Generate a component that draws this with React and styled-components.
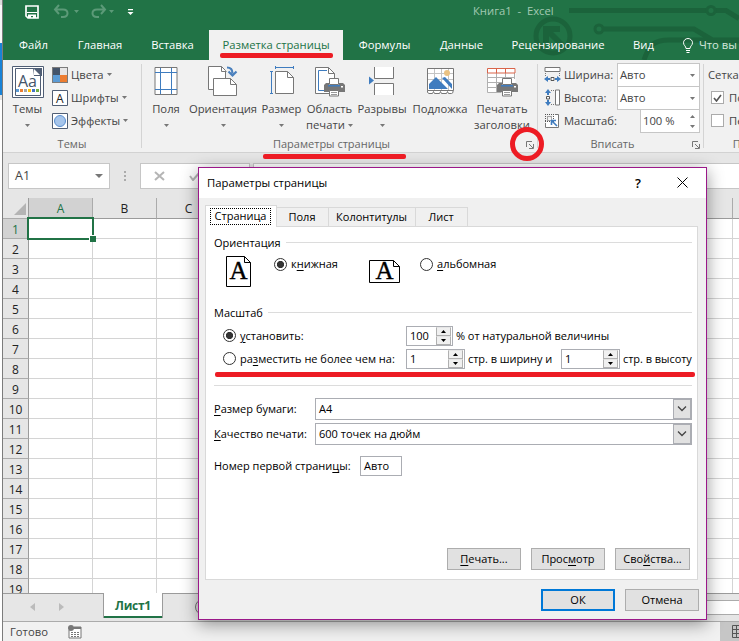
import styled, { createGlobalStyle, css } from 'styled-components';

const GlobalStyle = createGlobalStyle`
  * {
    box-sizing: border-box;
  }

  body {
    margin: 0;
    overflow: hidden;
    font-family: 'Open Sans', 'Noto Sans', sans-serif;
    font-size: 11.25px;
    line-height: 16px;
    color: #444;
  }

  svg {
    display: block;
    flex: none;
  }
`;

const Desktop = styled.div`
  position: relative;
  display: flex;
  width: 739px;
  height: 641px;
  overflow: hidden;
  white-space: nowrap;
`;

const BackWindow = styled.div`
  flex: none;
  width: 3px;
  border-right: 1px solid #7c7c7c;
  background: linear-gradient(#dcdcdc 5px, #f7f7f7 5px 43px, #1883d7 43px 95px, #e4e4e4 95px 100px, #fff 100px);
`;

const Window = styled.main`
  flex: 1;
  min-width: 0;
  display: flex;
  flex-direction: column;
  background: #e6e6e6;
`;

const Text = styled.span`
  u {
    text-underline-offset: 2px;
    text-decoration-thickness: 1px;
  }
`;

/* ---------- title bar and tabs ---------- */

const Top = styled.header`
  position: relative;
  flex: none;
  height: 60px;
  background: #217346;
  color: #fff;
`;

const Circuit = styled.svg`
  position: absolute;
  top: 0;
  right: 0;
`;

const TitleBar = styled.div`
  position: relative;
  display: flex;
  height: 30px;
  padding: 4px 0 0 22px;
`;

const DocTitle = styled.div`
  margin: -1px 0 0 336px;
  color: #a3c9b2;
  white-space: pre;
`;

const Tabs = styled.nav`
  position: relative;
  display: flex;
  height: 30px;
`;

const Tab = styled.div`
  flex: none;
  display: flex;
  align-items: center;
  justify-content: center;
  width: ${({ $w }) => $w}px;
  height: 30px;
  ${({ $active }) => $active && css`
    background: #f1f1f1;
    color: #217346;
  `}
`;

const TellMe = styled.div`
  display: flex;
  align-items: center;
  gap: 6px;
  padding-left: 15px;
  color: #d5e6dc;
`;

/* ---------- ribbon ---------- */

const Ribbon = styled.section`
  flex: none;
  display: flex;
  height: 93px;
  background: #f1f1f1;
  border-bottom: 1px solid #d2d2d2;
`;

const Group = styled.div`
  flex: none;
  display: flex;
  flex-direction: column;
  width: ${({ $w }) => $w}px;
  height: 84px;
  margin-top: 4px;
  border-right: 1px solid #d4d4d4;
`;

const GroupBody = styled.div`
  flex: none;
  display: flex;
  height: 72px;
  margin-top: -1px;
  padding-left: ${({ $pl }) => $pl || 0}px;
`;

const GroupFooter = styled.div`
  position: relative;
  flex: none;
  display: flex;
  align-items: center;
  justify-content: center;
  height: 16px;
  margin-top: 1px;
  padding-right: ${({ $pr }) => $pr || 0}px;
  color: #666;
  font-size: 11px;
`;

const Launcher = styled.span`
  position: absolute;
  right: 3px;
  top: 5px;
`;

const BigButton = styled.div`
  flex: none;
  display: flex;
  flex-direction: column;
  align-items: center;
  width: ${({ $w }) => $w}px;
`;

const BigIcon = styled.div`
  height: 38px;
  padding-top: 3px;
`;

const BigLine = styled.div`
  display: flex;
  align-items: center;
  gap: 3px;
  height: 16px;
`;

const Stack = styled.div`
  display: flex;
  flex-direction: column;
  margin-left: ${({ $ml }) => $ml || 0}px;
`;

const SmallRow = styled.div`
  display: flex;
  align-items: center;
  gap: 3px;
  height: 23px;
`;

const SmallLabel = styled.div`
  width: ${({ $w }) => ($w ? `${$w}px` : 'auto')};
`;

const RibbonField = styled.div`
  display: flex;
  align-items: center;
  justify-content: space-between;
  width: ${({ $w }) => $w}px;
  height: 24px;
  margin: 0 0 -1px -5px;
  padding: 0 4px 0 2px;
  border: 1px solid #c6c6c6;
  background: #fff;
`;

const Check = styled.span`
  display: flex;
  align-items: center;
  justify-content: center;
  width: 13px;
  height: 13px;
  margin: 0 2px 0 3px;
  border: 1px solid #ababab;
  background: #fff;
`;

/* ---------- formula bar ---------- */

const FormulaBar = styled.div`
  flex: none;
  display: flex;
  height: 45px;
  padding: 10px 0 0 5px;
`;

const NameBox = styled.div`
  flex: none;
  display: flex;
  align-items: center;
  justify-content: space-between;
  width: 102px;
  height: 26px;
  padding: 0 6px;
  border: 1px solid #c6c6c6;
  background: #fff;
  font-size: 12.5px;
`;

const Dots = styled.div`
  flex: none;
  display: flex;
  flex-direction: column;
  justify-content: center;
  gap: 2px;
  width: 30px;
  height: 26px;
  padding-left: 14px;
  i {
    width: 2px;
    height: 2px;
    background: #ababab;
  }
`;

const FormulaBox = styled.div`
  flex: none;
  display: flex;
  align-items: center;
  gap: 24px;
  width: ${({ $w }) => $w}px;
  height: 26px;
  margin-right: 3px;
  padding-left: 13px;
  border: 1px solid #c6c6c6;
  background: #fff;
`;

/* ---------- sheet ---------- */

const Sheet = styled.section`
  flex: none;
  display: grid;
  grid-template-columns: 26px repeat(12, 64px);
  grid-template-rows: 21px;
  grid-auto-rows: 20px;
  height: 396px;
  overflow: hidden;
  border-bottom: 1px solid #9b9b9b;
`;

const Corner = styled.div`
  display: flex;
  align-items: flex-end;
  justify-content: flex-end;
  padding: 0 2px 3px 0;
  border-right: 1px solid #9b9b9b;
  border-bottom: 1px solid #ababab;
`;

const Heading = styled.div`
  display: flex;
  align-items: center;
  justify-content: center;
  font: 12px 'Open Sans', sans-serif;
  color: #222;
  border-right: 1px solid #ababab;
  border-bottom: 1px solid #9b9b9b;
  ${({ $row }) => $row && css`
    border-right-color: #9b9b9b;
    border-bottom-color: #ababab;
    padding-top: 2px;
  `}
  ${({ $on }) => $on && css`
    background: #d2d2d2;
    color: #217346;
  `}
`;

const Cell = styled.div`
  position: relative;
  background: #fff;
  border-right: 1px solid #d4d4d4;
  border-bottom: 1px solid #d4d4d4;
`;

const Selection = styled.div`
  position: absolute;
  z-index: 1;
  left: -2px;
  top: -2px;
  width: 67px;
  height: 23px;
  border: 2px solid #217346;
  &::after {
    content: '';
    position: absolute;
    right: -4px;
    bottom: -4px;
    width: 6px;
    height: 6px;
    border: solid #fff;
    border-width: 1px 0 0 1px;
    background: #217346;
  }
`;

const SheetBar = styled.div`
  flex: none;
  display: flex;
  justify-content: space-between;
  height: 28px;
  border-bottom: 1px solid #ababab;
`;

const SheetTabs = styled.div`
  display: flex;
  align-items: flex-start;
`;

const NavArrows = styled.div`
  display: flex;
  gap: 24px;
  width: 100px;
  padding: 9px 0 0 27px;
`;

const SheetTab = styled.div`
  position: relative;
  width: 60px;
  height: 25px;
  margin-top: -1px;
  padding-top: 5px;
  border: solid #9b9b9b;
  border-width: 0 1px;
  box-shadow: inset 0 -2px #217346;
  background: #fff;
  color: #217346;
  font-size: 12px;
  font-weight: 700;
  letter-spacing: -0.3px;
  text-align: center;
`;

const AddSheet = styled.div`
  width: 16px;
  height: 16px;
  margin: 5px 0 0 32px;
  border: 1px solid #777;
  border-radius: 50%;
`;

const ScrollTrack = styled.div`
  width: 139px;
  height: 15px;
  margin-top: 6px;
  border: solid #ababab;
  border-width: 1px 0;
  background: #fff;
`;

const StatusBar = styled.footer`
  flex: none;
  display: flex;
  align-items: center;
  gap: 20px;
  height: 19px;
  padding-left: 7px;
  background: #f1f1f1;
`;

const ViewButton = styled.div`
  display: flex;
  align-items: center;
  width: 19px;
  height: 19px;
  margin-left: auto;
  padding-left: 12px;
  background: #c6c6c6;
`;

/* ---------- dialog ---------- */

const Dialog = styled.section`
  position: absolute;
  left: 198px;
  top: 167px;
  width: 509px;
  height: 453px;
  border: 1px solid #9b1889;
  background: #f0f0f0;
  color: #000;
  font-size: 11px;
  box-shadow: 0 4px 16px rgba(0, 0, 0, 0.42);
`;

const DialogTitle = styled.div`
  display: flex;
  align-items: center;
  height: 30px;
  padding: 0 18px 1px 8px;
  background: #fff;
  font-size: 11.3px;
`;

const Help = styled.span`
  margin-left: auto;
  margin-right: 36px;
  font-size: 13px;
  font-weight: 600;
`;

const DialogTabs = styled.div`
  position: relative;
  display: flex;
  align-items: flex-end;
  height: 28px;
  margin-left: 6px;
`;

const DialogTab = styled.div`
  display: flex;
  align-items: center;
  justify-content: center;
  width: ${({ $w }) => $w}px;
  height: 19px;
  padding-right: 1px;
  border: 1px solid #d9d9d9;
  border-width: 1px 1px 0 0;
  ${({ $active }) => $active && css`
    height: 22px;
    margin-bottom: -1px;
    padding-bottom: 1px;
    border-left-width: 1px;
    background: #fff;
    z-index: 1;
  `}
`;

const Focus = styled.span`
  height: 17px;
  padding: 0 4px;
  border: 1px dotted #000;
  line-height: 14px;
`;

const Panel = styled.div`
  width: 493px;
  height: 354px;
  margin-left: 6px;
  padding: 7px 5px 0 8px;
  border: 1px solid #d9d9d9;
  background: #fff;
`;

const Legend = styled.div`
  display: flex;
  align-items: center;
  gap: 5px;
  height: 18px;
  margin-top: ${({ $mt }) => $mt || 0}px;
  &::after {
    content: '';
    flex: 1;
    height: 1px;
    margin-top: -2px;
    background: #dcdcdc;
  }
`;

const Rule = styled.div`
  height: 1px;
  margin-top: 16px;
  background: #dcdcdc;
`;

const Row = styled.div`
  display: flex;
  align-items: ${({ $top }) => ($top ? 'flex-start' : 'center')};
  height: ${({ $h }) => $h}px;
  margin-top: ${({ $mt }) => $mt || 0}px;
  padding-left: ${({ $pl }) => $pl || 0}px;
`;

const Option = styled.div`
  flex: none;
  display: flex;
  align-items: center;
  gap: 4px;
  width: ${({ $w }) => ($w ? `${$w}px` : 'auto')};
  height: 20px;
`;

const Radio = styled.span`
  flex: none;
  width: 13px;
  height: 13px;
  border: 1px solid #333;
  border-radius: 50%;
  background: ${({ $on }) => ($on ? 'radial-gradient(circle, #333 3.2px, #fff 4px)' : '#fff')};
`;

const PageIcon = styled.div`
  flex: none;
  width: ${({ $w }) => $w}px;
  margin-top: ${({ $mt }) => $mt}px;
`;

const FieldLabel = styled.div`
  flex: none;
  width: ${({ $w }) => $w}px;
`;

const Field = styled.div`
  flex: none;
  display: flex;
  align-items: center;
  justify-content: space-between;
  width: ${({ $w }) => $w}px;
  height: ${({ $h }) => $h || 20}px;
  padding-left: 3px;
  border: 1px solid #abadb3;
  background: #fff;
`;

const Spin = styled.div`
  display: flex;
  flex-direction: column;
  padding-right: 1px;
  span {
    display: flex;
    align-items: center;
    justify-content: center;
    width: 15px;
    height: 9px;
    border: 1px solid #b0b0b0;
    border-top-color: #e6e6e6;
    background: #f0f0f0;
  }
`;

const DropButton = styled.div`
  display: flex;
  align-items: center;
  justify-content: center;
  width: 18px;
  height: 20px;
  border: 1px solid #abadb3;
  background: #e1e1e1;
`;

const Note = styled.span`
  padding-left: 3px;
  letter-spacing: -0.05px;
`;

const Buttons = styled.div`
  display: flex;
  justify-content: flex-end;
  gap: 10px;
  margin-top: ${({ $mt }) => $mt}px;
  padding-right: ${({ $pr }) => $pr}px;
`;

const Button = styled.button`
  width: ${({ $w }) => $w || 74}px;
  height: 22px;
  padding: 0;
  border: ${({ $primary }) => ($primary ? '2px solid #0078d7' : '1px solid #adadad')};
  background: #e1e1e1;
  color: #000;
  font: inherit;
  line-height: 18px;
`;

/* ---------- red marks ---------- */

const Mark = styled.div`
  position: absolute;
  left: ${({ $x }) => $x}px;
  top: ${({ $y }) => $y}px;
  width: ${({ $w }) => $w}px;
  height: 5px;
  border-radius: 2px;
  background: #ed1c24;
`;

const Ring = styled.div`
  position: absolute;
  left: 510px;
  top: 127px;
  width: 34px;
  height: 34px;
  border: 5px solid #ed1c24;
  border-radius: 50%;
`;

/* ---------- icons ---------- */

const Arrow = ({ up, w = 5, h = 3, color = '#777' }) => (
  <svg width={w} height={h} viewBox="0 0 10 6" preserveAspectRatio="none">
    <path d={up ? 'M0 6h10L5 0z' : 'M0 0h10L5 6z'} fill={color} />
  </svg>
);

const LauncherIcon = () => (
  <Launcher>
    <svg width="8" height="8" fill="none" stroke="#777">
      <path d="M.5 6V.5H6M3 3l4 4M7.500 3v4.500H3" />
    </svg>
  </Launcher>
);

const QuickIcons = () => (
  <svg width="112" height="18" viewBox="0 0 112 18" fill="none">
    <path d="M1 2h12v12H3l-2-2z" stroke="#fff" strokeWidth="1.700" />
    <path d="M2 8.500h10" stroke="#fff" />
    <path d="M3 10.500h8V14H8v-2H6v2H3z" fill="#fff" />
    <g stroke="#5c9a78" strokeWidth="2">
      <path d="M34 1l-4 4.500 4 4.500M31 5.500h7c6 0 6 7.500 0 7.500h-2" />
      <path d="M76 1l4 4.500-4 4.500M79 5.500h-7c-6 0-6 7.500 0 7.500h2" />
    </g>
    <path d="M49 6h5l-2.500 3zM84 6h5l-2.500 3z" fill="#5c9a78" />
    <path d="M103 5h5v1.200h-5zM102.500 8h6l-3 3z" fill="#fff" />
  </svg>
);

const ThemeIcon = () => (
  <svg width="32" height="32" fill="none">
    <path d="M.5.5h31v31H.5z" fill="#fff" stroke="#505e75" />
    <path d="M3.500 2.500h18l7 7v20h-25z" stroke="#505e75" strokeWidth="1" />
    <path d="M21 2h9v8h-8z" fill="#505e75" />
    <path d="M22 3v6h6z" fill="#fff" />
    <text x="6" y="21" fontSize="17" fill="#44546a" textLength="19" lengthAdjust="spacingAndGlyphs">Aa</text>
    {['#5b9bd5', '#ed7d31', '#a5a5a5', '#ffc000', '#4472c4', '#70ad47'].map((c, i) => (
      <rect key={c} x={4 + i * 4} y="23" width="3" height="3" fill={c} />
    ))}
  </svg>
);

const ColorsIcon = () => (
  <svg width="16" height="16">
    <path d="M0 0h16v16H0z" fill="#7b7b7b" />
    <path d="M1 1h7v7H1z" fill="#44546a" />
    <path d="M8 1h7v7H8z" fill="#e7e6e6" />
    <path d="M1 8h7v7H1z" fill="#5b9bd5" />
    <path d="M8 8h7v7H8z" fill="#ed7d31" />
  </svg>
);

const FontsIcon = () => (
  <svg width="16" height="16">
    <path d="M.5.5h15v15H.5z" fill="#fff" stroke="#505e75" />
    <text x="4" y="12.500" fontSize="12" fill="#222">A</text>
  </svg>
);

const EffectsIcon = () => (
  <svg width="16" height="16">
    <path d="M.5.5h15v15H.5z" fill="#fff" stroke="#505e75" />
    <circle cx="8" cy="8" r="5.500" fill="#a6c5eb" stroke="#5b8fd0" />
  </svg>
);

const MarginsIcon = () => (
  <svg width="24" height="29" fill="none">
    <path d="M1 1.500h22v27H1z" fill="#fff" stroke="#777" />
    <path d="M6.500 2v26M17.500 2v26M1 6.500h22M1 23.500h22" stroke="#3f7cbf" />
  </svg>
);

const OrientationIcon = () => (
  <svg width="30" height="31" fill="none">
    <path d="M.5.500h13l4 4v19H.5z" fill="#fff" stroke="#777" />
    <path d="M13.500.500v5h5" stroke="#777" />
    <path d="M5.500 12.500h17l6 6v11h-23z" fill="#fff" stroke="#777" />
    <path d="M22.500 12.500v6h6" stroke="#777" />
    <path d="M19 1.500c4 0 5.500 2 5.500 6M20.500 5.500l4 4 4-4" stroke="#4a80bd" strokeWidth="2.200" />
  </svg>
);

const SizeIcon = () => (
  <svg width="24" height="29" fill="none">
    <path d="M5.500 5.500h12l6 6v16h-18z" fill="#fff" stroke="#777" />
    <path d="M17.500 5.500v6h6" stroke="#777" />
    <path d="M5 1.500h19M5.500 0v3M23.500 0v3M1.500 5v23M0 5.500h3M0 27.500h3" stroke="#3f7cbf" />
  </svg>
);

const Printer = ({ x, y }) => (
  <g transform={`translate(${x} ${y})`}>
    <path d="M5.500.500h9v6h-9z" fill="#fff" stroke="#777" />
    <path d="M2 5h3v3h10V5h4l2 2v7H0V7z" fill="#777" />
    <path d="M4 7h12v1.500H4z" fill="#3f7cbf" />
    <path d="M17 8h2v1.500h-2z" fill="#fff" />
    <path d="M5.500 12.500h9v5.500h-9z" fill="#fff" stroke="#777" />
    <path d="M7 14.500h6M7 16.500h6" stroke="#999" />
  </g>
);

const PrintAreaIcon = () => (
  <svg width="30" height="31" fill="none">
    <path d="M.5 1.500h13l6 6v20H.5z" fill="#fff" stroke="#777" />
    <path d="M13.500 1.500v6h6" stroke="#777" />
    <path d="M12 4.500H3.500v20H10" stroke="#3f7cbf" />
    <Printer x={9} y={12} />
  </svg>
);

const BreaksIcon = () => (
  <svg width="26" height="29" fill="none">
    <path d="M5.500 1v11.500h19V1M5.500 29V17.500h19V29" fill="#fff" stroke="#777" />
    <path d="M0 10.500l5 4-5 4z" fill="#3f7cbf" />
  </svg>
);

const BackgroundIcon = () => (
  <svg width="27" height="28" fill="none">
    <path d="M.5 2.500h26v22H.5z" fill="#fff" stroke="#777" />
    <path d="M1 7.500h25M1 13.500h25M7.500 3v21M14.500 3v21M21.500 3v21" stroke="#c4c4c4" />
    <circle cx="20" cy="7" r="3" fill="#eac282" />
    <path d="M2 23v-5l7-7 12 12zM15 12l3-1 7 7v5z" fill="#3f7cbf" />
    <path d="M.5 24.500v2l1.500 1h3.500l1-2 1 2h5l1-2 1 2h5l1-2 1 2h3l1.500-1v-2z" fill="#fff" stroke="#777" />
  </svg>
);

const PrintTitlesIcon = () => (
  <svg width="31" height="31" fill="none">
    <path d="M.5 2.500h28v24H.5z" fill="#fff" />
    <path d="M.5 7v19.500h14M0 11.500h28M0 16.500h16M0 21.500h14M9.500 7v19M18.500 7v6M27.500 7v6" stroke="#b0b0b0" />
    <path d="M.5 2.500h27.500v4.500H.5zM9.500 2v5M18.500 2v5" stroke="#d9644a" />
    <Printer x={10} y={12} />
  </svg>
);

const WidthIcon = () => (
  <svg width="17" height="17" fill="none">
    <path d="M1 1.500h15v4H1z" fill="#fff" stroke="#777" />
    <path d="M1.500 7v3M15.500 7v3" stroke="#777" strokeDasharray="1 1" />
    <path d="M0 13l4-3v2h2v2H4v2zM17 13l-4-3v2h-2v2h2v2z" fill="#3f7cbf" />
    <path d="M7 11.500h3v3H7z" fill="#fff" stroke="#555" />
  </svg>
);

const HeightIcon = () => (
  <svg width="17" height="17" fill="none">
    <path d="M11.500 1h4v15h-4z" fill="#fff" stroke="#777" />
    <path d="M7 1.500h3M7 15.500h3" stroke="#777" strokeDasharray="1 1" />
    <path d="M4 0l3 4H5v2H3V4H1zM4 17l3-4H5v-2H3v2H1z" fill="#3f7cbf" />
    <path d="M2.500 7.500h3v2.500h-3z" fill="#fff" stroke="#555" />
  </svg>
);

const ScaleIcon = () => (
  <svg width="17" height="16" fill="none">
    <path d="M11 1.500h3.500v13h-13V10" fill="#fff" stroke="#777" />
    <path d="M1 1.500h9M1 8.500h9M1.500 1v8M9.500 1v8M3.500 3.500h4v4h-4z" stroke="#555" strokeDasharray="1 1" />
    <path d="M7.500 12V7.500H12M8 8l5 5" stroke="#3f7cbf" strokeWidth="1.600" />
  </svg>
);

const PageA = ({ w, h }) => (
  <svg width={w} height={h} fill="none" stroke="#000">
    <path d={`M.5.500H${w - 6.5}l6 6V${h - 0.5}H.5z`} fill="#fff" />
    <path d={`M${w - 6.5}.500v6h6`} />
    <text
      x={w / 2} y={h / 2 + 7.5} textAnchor="middle" fill="#000" strokeWidth="0.4"
      fontFamily="'Liberation Serif', serif" fontSize="25"
    >
      A
    </text>
  </svg>
);

/* ---------- parts ---------- */

const Spinner = ({ value, width }) => (
  <Field $w={width}>
    {value}
    <Spin>
      <span><Arrow up color="#000" /></span>
      <span><Arrow color="#000" /></span>
    </Spin>
  </Field>
);

const Combo = ({ children }) => (
  <Field $w={377} $h={22}>
    {children}
    <DropButton>
      <svg width="10" height="6" fill="none" stroke="#444" strokeWidth="1.300">
        <path d="M1 .500l4 4 4-4" />
      </svg>
    </DropButton>
  </Field>
);

const tabs = [
  { name: 'Файл', w: 61 },
  { name: 'Главная', w: 72 },
  { name: 'Вставка', w: 73 },
  { name: 'Разметка страницы', w: 134, active: true },
  { name: 'Формулы', w: 83 },
  { name: 'Данные', w: 71 },
  { name: 'Рецензирование', w: 122 },
  { name: 'Вид', w: 49 },
];

const pageButtons = [
  { lines: ['Поля'], w: 42, icon: <MarginsIcon /> },
  { lines: ['Ориентация'], w: 72, icon: <OrientationIcon /> },
  { lines: ['Размер'], w: 45, icon: <SizeIcon /> },
  { lines: ['Область', 'печати'], w: 51, icon: <PrintAreaIcon /> },
  { lines: ['Разрывы'], w: 54, icon: <BreaksIcon /> },
  { lines: ['Подложка'], w: 62, icon: <BackgroundIcon />, plain: true },
  { lines: ['Печатать', 'заголовки'], w: 62, icon: <PrintTitlesIcon />, plain: true },
];

const themeRows = [
  { name: 'Цвета', icon: <ColorsIcon /> },
  { name: 'Шрифты', icon: <FontsIcon /> },
  { name: 'Эффекты', icon: <EffectsIcon /> },
];

const columns = ['A', 'B', 'C', 'D', 'E', 'F', 'G', 'H', 'I', 'J', 'K', 'L'];
const rows = Array.from({ length: 19 }, (_, i) => i + 1);

function BigItem({ lines, w, icon, plain }) {
  return (
    <BigButton $w={w}>
      <BigIcon>{icon}</BigIcon>
      <BigLine>{lines[0]}</BigLine>
      <BigLine>
        {lines[1]}
        {!plain && <Arrow />}
      </BigLine>
    </BigButton>
  );
}

function PageSetup() {
  return (
    <Dialog>
      <DialogTitle>
        <Text>Параметры страницы</Text>
        <Help>?</Help>
        <svg width="11" height="11" stroke="#000">
          <path d="M.5.500l10 10M10.500.500l-10 10" />
        </svg>
      </DialogTitle>
      <DialogTabs>
        <DialogTab $w={72} $active><Focus>Страница</Focus></DialogTab>
        <DialogTab $w={52}>Поля</DialogTab>
        <DialogTab $w={87}>Колонтитулы</DialogTab>
        <DialogTab $w={52}>Лист</DialogTab>
      </DialogTabs>
      <Panel>
        <Legend>Ориентация</Legend>
        <Row $h={36} $mt={2} $pl={12} $top>
          <PageIcon $w={48} $mt={2}><PageA w={25} h={31} /></PageIcon>
          <Option $w={95}><Radio $on /><Text>к<u>н</u>ижная</Text></Option>
          <PageIcon $w={51} $mt={6}><PageA w={31} h={23} /></PageIcon>
          <Option><Radio /><Text><u>а</u>льбомная</Text></Option>
        </Row>
        <Legend $mt={14}>Масштаб</Legend>
        <Row $h={21} $mt={3} $pl={9}>
          <Option $w={183}><Radio $on /><Text><u>у</u>становить:</Text></Option>
          <Spinner value="100" width={47} />
          <Note>% от натуральной величины</Note>
        </Row>
        <Row $h={21} $mt={2} $pl={9}>
          <Option $w={183}><Radio /><Text>ра<u>з</u>местить не более чем на:</Text></Option>
          <Spinner value="1" width={59} />
          <FieldLabel $w={96}><Note>стр. в ширину и</Note></FieldLabel>
          <Spinner value="1" width={59} />
          <Note>стр. в высоту</Note>
        </Row>
        <Rule />
        <Row $h={22} $mt={12}>
          <FieldLabel $w={101}><Text><u>Р</u>азмер бумаги:</Text></FieldLabel>
          <Combo>A4</Combo>
        </Row>
        <Row $h={22} $mt={3}>
          <FieldLabel $w={101}><Text><u>К</u>ачество печати:</Text></FieldLabel>
          <Combo>600 точек на дюйм</Combo>
        </Row>
        <Row $h={20} $mt={11}>
          <FieldLabel $w={146}><Text>Номер первой страни<u>ц</u>ы:</Text></FieldLabel>
          <Field $w={42}>Авто</Field>
        </Row>
        <Buttons $mt={72} $pr={2}>
          <Button><Text><u>П</u>ечать...</Text></Button>
          <Button><Text>Прос<u>м</u>отр</Text></Button>
          <Button $w={75}><Text>Сво<u>й</u>ства...</Text></Button>
        </Buttons>
      </Panel>
      <Buttons $mt={9} $pr={7}>
        <Button $primary>ОК</Button>
        <Button>Отмена</Button>
      </Buttons>
    </Dialog>
  );
}

export default function App() {
  return (
    <Desktop>
      <GlobalStyle />
      <BackWindow />
      <Window>
        <Top>
          <Circuit width="250" height="60" fill="none" stroke="#1b633b" strokeWidth="5">
            <circle cx="64" cy="36" r="17" />
            <path d="M57 29l16 16M57 43V29h14" strokeWidth="6" />
            <path d="M80 10.500h138M227 10.500h10l13 8" />
            <circle cx="222" cy="10.500" r="4" strokeWidth="3" />
            <circle cx="110" cy="29" r="4" strokeWidth="3" />
            <path d="M115 29h90l20 12h25M155 60c5-15 10-20 25-20h70" />
          </Circuit>
          <TitleBar>
            <QuickIcons />
            <DocTitle>Книга1  -  Excel</DocTitle>
          </TitleBar>
          <Tabs>
            {tabs.map(({ name, w, active }) => (
              <Tab key={name} $w={w} $active={active}>{name}</Tab>
            ))}
            <TellMe>
              <svg width="10" height="15" fill="none" stroke="#fff">
                <path d="M3 10.500C3 8 .5 7.500.500 4.800a4.500 4.300 0 0 1 9 0C9.500 7.500 7 8 7 10.500zM3 12.500h4M3.500 14.500h3" />
              </svg>
              Что вы хотите
            </TellMe>
          </Tabs>
        </Top>

        <Ribbon>
          <Group $w={139}>
            <GroupBody $pl={4}>
              <BigItem lines={['Темы']} w={41} icon={<ThemeIcon />} />
              <Stack $ml={4}>
                {themeRows.map(({ name, icon }) => (
                  <SmallRow key={name}>{icon}{name}<Arrow /></SmallRow>
                ))}
              </Stack>
            </GroupBody>
            <GroupFooter>Темы</GroupFooter>
          </Group>
          <Group $w={396}>
            <GroupBody $pl={3}>
              {pageButtons.map((item) => <BigItem key={item.lines[0]} {...item} />)}
            </GroupBody>
            <GroupFooter $pr={16}>Параметры страницы<LauncherIcon /></GroupFooter>
          </Group>
          <Group $w={166}>
            <GroupBody $pl={6}>
              <Stack>
                <SmallRow>
                  <WidthIcon /><SmallLabel $w={55}>Ширина:</SmallLabel>
                  <RibbonField $w={83}>Авто<Arrow /></RibbonField>
                </SmallRow>
                <SmallRow>
                  <HeightIcon /><SmallLabel $w={55}>Высота:</SmallLabel>
                  <RibbonField $w={83}>Авто<Arrow /></RibbonField>
                </SmallRow>
                <SmallRow>
                  <ScaleIcon /><SmallLabel $w={78}>Масштаб:</SmallLabel>
                  <RibbonField $w={60}>
                    100 %
                    <svg width="5" height="13" fill="#777"><path d="M0 3h5L2.500 0zM0 10h5l-2.500 3z" /></svg>
                  </RibbonField>
                </SmallRow>
              </Stack>
            </GroupBody>
            <GroupFooter $pr={16}>Вписать<LauncherIcon /></GroupFooter>
          </Group>
          <Group $w={120}>
            <GroupBody $pl={4}>
              <Stack>
                <SmallRow>Сетка</SmallRow>
                <SmallRow>
                  <Check>
                    <svg width="9" height="8" fill="none" stroke="#555" strokeWidth="1.600"><path d="M1 4l2.500 3L8 1" /></svg>
                  </Check>
                  Показать
                </SmallRow>
                <SmallRow><Check />Печать</SmallRow>
              </Stack>
            </GroupBody>
            <GroupFooter>Параметры</GroupFooter>
          </Group>
        </Ribbon>

        <FormulaBar>
          <NameBox>A1<Arrow w={8} h={4} /></NameBox>
          <Dots><i /><i /><i /></Dots>
          <FormulaBox $w={110}>
            <svg width="11" height="10" stroke="#b5b5b5" strokeWidth="2"><path d="M1 1l9 8M10 1L1 9" /></svg>
            <svg width="12" height="10" fill="none" stroke="#b5b5b5" strokeWidth="2"><path d="M1 5l3 4 7-8" /></svg>
          </FormulaBox>
          <FormulaBox $w={520} />
        </FormulaBar>

        <Sheet>
          <Corner>
            <svg width="12" height="12"><path d="M12 0v12H0z" fill="#b4b4b4" /></svg>
          </Corner>
          {columns.map((name) => <Heading key={name} $on={name === 'A'}>{name}</Heading>)}
          {rows.map((n) => [
            <Heading key={n} $row $on={n === 1}>{n}</Heading>,
            ...columns.map((name) => (
              <Cell key={name + n}>{n === 1 && name === 'A' && <Selection />}</Cell>
            )),
          ])}
        </Sheet>

        <SheetBar>
          <SheetTabs>
            <NavArrows>
              <svg width="5" height="8"><path d="M5 0v8L0 4z" fill="#bbb" /></svg>
              <svg width="5" height="8"><path d="M0 0v8l5-4z" fill="#bbb" /></svg>
            </NavArrows>
            <SheetTab>Лист1</SheetTab>
            <AddSheet />
          </SheetTabs>
          <ScrollTrack />
        </SheetBar>

        <StatusBar>
          Готово
          <svg width="14" height="14" fill="none">
            <path d="M1 5v8h12V2H6" fill="#fff" stroke="#777" />
            <path d="M5 2h8v2H5z" fill="#777" />
            <path d="M3 7.500h9M3 9.500h9M3 11.500h9" stroke="#777" strokeDasharray="2 1" />
            <circle cx="3" cy="3" r="3" fill="#777" />
          </svg>
          <ViewButton>
            <svg width="13" height="13" fill="none" stroke="#555"><path d="M.5.500h12v12H.5zM4.500 0v13M8.500 0v13M0 4.500h13M0 8.500h13" /></svg>
          </ViewButton>
        </StatusBar>
      </Window>

      <PageSetup />

      <Mark $x={220} $y={53} $w={113} />
      <Mark $x={263} $y={154} $w={143} />
      <Mark $x={215} $y={372} $w={480} />
      <Ring />
    </Desktop>
  );
}
